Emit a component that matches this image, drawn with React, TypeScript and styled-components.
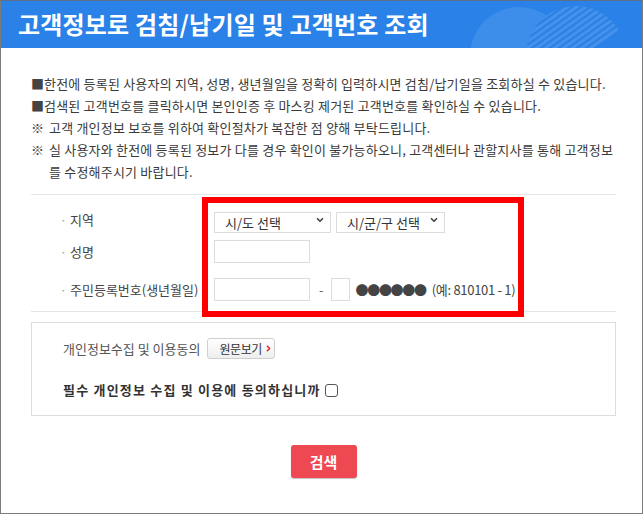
import React from 'react'
import styled, { createGlobalStyle } from 'styled-components'
import { ChevronDown, ChevronRight } from 'lucide-react'

const GlobalStyle = createGlobalStyle`
  html, body {
    margin: 0;
    padding: 0;
    background: #fff;
  }
  body {
    font-family: "Noto Sans CJK KR", "Noto Sans", sans-serif;
    color: #333;
  }
  * {
    box-sizing: border-box;
  }
`

const Frame = styled.div`
  position: relative;
  width: 643px;
  height: 514px;
  border: 1px solid #7c7c7c;
  border-top-color: #5d6f86;
  background: #fff;
  overflow: hidden;
`

const Header = styled.header`
  position: relative;
  height: 47px;
  background: #2a82e8;
  display: flex;
  align-items: center;
  padding: 0 0 2px 17px;
  overflow: hidden;
`

const Title = styled.h1`
  position: relative;
  z-index: 1;
  margin: 0;
  color: #fff;
  font-size: 24px;
  font-weight: 700;
  letter-spacing: 0.2px;
  line-height: 1;
`

const Deco = styled.svg`
  position: absolute;
  right: 0;
  top: 0;
`

const Content = styled.div`
  padding: 25px 26px 0 30px;
`

const NoticeList = styled.ul`
  list-style: none;
  margin: 0;
  padding: 0;
  font-size: 13px;
  letter-spacing: 0.2px;
  line-height: 22px;
  color: #3a3a3a;
`

const Notice = styled.li<{ $mark: string }>`
  position: relative;
  padding-left: ${p => (p.$mark === '※' ? '18px' : '13px')};

  &::before {
    content: '${p => p.$mark}';
    position: absolute;
    left: 0;
    top: 0;
    color: #444;
  }
`

const Divider = styled.hr`
  margin: 11px 0 0;
  border: 0;
  border-top: 1px solid #e6e6e6;
`

const Form = styled.div`
  display: grid;
  grid-template-columns: 154px 1fr;
  grid-template-rows: 21px 23px 23px;
  row-gap: 10px;
  padding: 14px 0 15px 29px;

  & > :nth-child(5),
  & > :nth-child(6) {
    margin-top: 10px;
  }
`

const Label = styled.div`
  display: flex;
  align-items: center;
  font-size: 13px;
  color: #444;
  letter-spacing: 0;

  &::before {
    content: '·';
    color: #999;
    width: 10px;
    font-size: 12px;
  }
`

const Field = styled.div`
  display: flex;
  align-items: center;
  gap: 5px;
`

const SelectWrap = styled.div<{ $w: number }>`
  position: relative;
  width: ${p => p.$w}px;
  height: 21px;

  svg {
    position: absolute;
    right: 6px;
    top: 6px;
    pointer-events: none;
  }
`

const Select = styled.select`
  appearance: none;
  width: 100%;
  height: 100%;
  border: 1px solid #dcdcdc;
  background: #fff;
  padding: 0 0 0 10px;
  font-family: inherit;
  font-size: 13px;
  color: #333;
  border-radius: 0;
  outline: none;
`

const Input = styled.input<{ $w: number }>`
  width: ${p => p.$w}px;
  height: 23px;
  border: 1px solid #dcdcdc;
  padding: 0 4px;
  font-family: inherit;
  font-size: 13px;
  outline: none;
`

const Dash = styled.span`
  font-size: 13px;
  color: #666;
  margin: 0 2px 0 4px;
`

const Masked = styled.span`
  font-size: 13px;
  letter-spacing: -1.3px;
  color: #444;
  margin-left: 1px;
`

const Example = styled.span`
  font-size: 13px;
  color: #444;
  letter-spacing: -0.3px;
  margin-left: 1px;
`

const Highlight = styled.div`
  position: absolute;
  left: 201px;
  top: 196px;
  width: 322px;
  height: 120px;
  border: 6px solid #ff0000;
  pointer-events: none;
`

const Consent = styled.div`
  margin-top: 10px;
  height: 94px;
  border: 1px solid #dddddd;
  padding: 15px 0 0 31px;
  display: flex;
  flex-direction: column;
  gap: 21px;
`

const ConsentRow = styled.div`
  display: flex;
  align-items: center;
  gap: 7px;
`

const ConsentText = styled.span<{ $bold?: boolean }>`
  font-size: 13px;
  color: ${p => (p.$bold ? '#333' : '#555')};
  font-weight: ${p => (p.$bold ? 700 : 400)};
  letter-spacing: ${p => (p.$bold ? '1.2px' : '0')};
`

const ViewButton = styled.button`
  display: flex;
  align-items: center;
  gap: 2px;
  height: 21px;
  width: 68px;
  padding: 0 0 0 11px;
  border: 1px solid #cfcfcf;
  border-radius: 3px;
  background: linear-gradient(#ffffff, #eeeeee);
  font-family: inherit;
  font-size: 12px;
  color: #333;
  letter-spacing: -0.4px;

  svg {
    color: #e02020;
  }
`

const Check = styled.input`
  appearance: none;
  width: 13px;
  height: 13px;
  margin: 2px 0 0 -3px;
  border: 1px solid #555;
  border-radius: 3px;
  background: #fff;
`

const Actions = styled.div`
  display: flex;
  justify-content: center;
  padding-top: 29px;
`

const SearchButton = styled.button`
  width: 66px;
  height: 33px;
  border: 0;
  border-radius: 3px;
  background: #ee4853;
  box-shadow: 0 1px 1px rgba(0, 0, 0, 0.25);
  color: #fff;
  font-family: inherit;
  font-size: 15px;
  font-weight: 700;
`

const HeaderDeco = () => (
  <Deco width="200" height="47" viewBox="0 0 200 47">
    <defs>
      <clipPath id="stripeCircle">
        <circle cx="134" cy="55" r="50" />
      </clipPath>
    </defs>
    <circle cx="77" cy="55" r="49" fill="#ffffff" fillOpacity="0.09" />
    <circle cx="134" cy="55" r="50" fill="#2a82e8" />
    <g clipPath="url(#stripeCircle)" stroke="#ffffff" strokeOpacity="0.13" strokeWidth="3">
      {[0, 1, 2, 3, 4, 5, 6, 7, 8, 9, 10].map(i => (
        <line key={i} x1={40 + i * 9} y1={60} x2={125 + i * 9} y2={0} />
      ))}
    </g>
  </Deco>
)

const App = () => {
  return (
    <>
      <GlobalStyle />
      <Frame>
        <Header>
          <Title>고객정보로 검침/납기일 및 고객번호 조회</Title>
          <HeaderDeco />
        </Header>
        <Content>
          <NoticeList>
            <Notice $mark="■">한전에 등록된 사용자의 지역, 성명, 생년월일을 정확히 입력하시면 검침/납기일을 조회하실 수 있습니다.</Notice>
            <Notice $mark="■">검색된 고객번호를 클릭하시면 본인인증 후 마스킹 제거된 고객번호를 확인하실 수 있습니다.</Notice>
            <Notice $mark="※">고객 개인정보 보호를 위하여 확인절차가 복잡한 점 양해 부탁드립니다.</Notice>
            <Notice $mark="※">실 사용자와 한전에 등록된 정보가 다를 경우 확인이 불가능하오니, 고객센터나 관할지사를 통해 고객정보를 수정해주시기 바랍니다.</Notice>
          </NoticeList>
          <Divider />
          <Form>
            <Label>지역</Label>
            <Field>
              <SelectWrap $w={117}>
                <Select defaultValue="">
                  <option value="">시/도 선택</option>
                </Select>
                <ChevronDown size={10} strokeWidth={4} color="#444" />
              </SelectWrap>
              <SelectWrap $w={109}>
                <Select defaultValue="">
                  <option value="">시/군/구 선택</option>
                </Select>
                <ChevronDown size={10} strokeWidth={4} color="#444" />
              </SelectWrap>
            </Field>
            <Label>성명</Label>
            <Field>
              <Input $w={96} type="text" />
            </Field>
            <Label>주민등록번호(생년월일)</Label>
            <Field>
              <Input $w={96} type="text" />
              <Dash>-</Dash>
              <Input $w={19} type="text" />
              <Masked>●●●●●●</Masked>
              <Example>(예: 810101 - 1)</Example>
            </Field>
          </Form>
          <Divider style={{ marginTop: 0 }} />
          <Consent>
            <ConsentRow>
              <ConsentText>개인정보수집 및 이용동의</ConsentText>
              <ViewButton type="button">
                원문보기
                <ChevronRight size={9} strokeWidth={4} />
              </ViewButton>
            </ConsentRow>
            <ConsentRow>
              <ConsentText $bold>필수 개인정보 수집 및 이용에 동의하십니까</ConsentText>
              <Check type="checkbox" />
            </ConsentRow>
          </Consent>
          <Actions>
            <SearchButton type="button">검색</SearchButton>
          </Actions>
        </Content>
        <Highlight />
      </Frame>
    </>
  )
}

export default App
